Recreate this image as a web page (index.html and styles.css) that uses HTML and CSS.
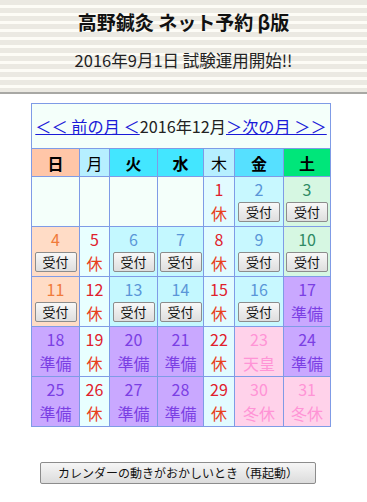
FILE: index.html
```html
<!DOCTYPE html>
<html lang="ja">
<head>
<meta charset="utf-8">
<title>高野鍼灸 ネット予約 β版</title>
<link rel="stylesheet" href="styles.css">
</head>
<body>
<header class="banner">
  <h1 class="title">高野鍼灸 ネット予約 β版</h1>
  <p class="subtitle">2016年9月1日 試験運用開始!!</p>
</header>
<main class="main">
  <table class="cal">
    <colgroup>
      <col class="c48"><col class="c30"><col class="c48"><col class="c46"><col class="c31"><col class="c49"><col class="c47">
    </colgroup>
    <tr class="nav-row">
      <td colspan="7" class="nav"><a href="#">＜＜ 前の月 ＜</a>2016年12月<a href="#">＞次の月 ＞＞</a></td>
    </tr>
    <tr class="head-row">
      <th class="h-sun">日</th><th class="h-mon">月</th><th class="h-tue">火</th><th class="h-wed">水</th><th class="h-thu">木</th><th class="h-fri">金</th><th class="h-sat">土</th>
    </tr>
    <tr>
      <td class="empty"></td><td class="empty"></td><td class="empty"></td><td class="empty"></td>
      <td class="closed thu"><div class="num">1</div><div class="lbl">休</div></td>
      <td class="open fri"><div class="num">2</div><button class="uk">受付</button></td>
      <td class="open sat"><div class="num">3</div><button class="uk">受付</button></td>
    </tr>
    <tr>
      <td class="open sun"><div class="num">4</div><button class="uk">受付</button></td>
      <td class="closed mon"><div class="num">5</div><div class="lbl">休</div></td>
      <td class="open tue"><div class="num">6</div><button class="uk">受付</button></td>
      <td class="open tue"><div class="num">7</div><button class="uk">受付</button></td>
      <td class="closed thu"><div class="num">8</div><div class="lbl">休</div></td>
      <td class="open fri"><div class="num">9</div><button class="uk">受付</button></td>
      <td class="open sat"><div class="num">10</div><button class="uk">受付</button></td>
    </tr>
    <tr>
      <td class="open sun"><div class="num">11</div><button class="uk">受付</button></td>
      <td class="closed mon"><div class="num">12</div><div class="lbl">休</div></td>
      <td class="open tue"><div class="num">13</div><button class="uk">受付</button></td>
      <td class="open tue"><div class="num">14</div><button class="uk">受付</button></td>
      <td class="closed thu"><div class="num">15</div><div class="lbl">休</div></td>
      <td class="open fri"><div class="num">16</div><button class="uk">受付</button></td>
      <td class="prep"><div class="num">17</div><div class="lbl">準備</div></td>
    </tr>
    <tr>
      <td class="prep"><div class="num">18</div><div class="lbl">準備</div></td>
      <td class="closed mon"><div class="num">19</div><div class="lbl">休</div></td>
      <td class="prep"><div class="num">20</div><div class="lbl">準備</div></td>
      <td class="prep"><div class="num">21</div><div class="lbl">準備</div></td>
      <td class="closed thu"><div class="num">22</div><div class="lbl">休</div></td>
      <td class="hol"><div class="num">23</div><div class="lbl">天皇</div></td>
      <td class="prep"><div class="num">24</div><div class="lbl">準備</div></td>
    </tr>
    <tr>
      <td class="prep"><div class="num">25</div><div class="lbl">準備</div></td>
      <td class="closed mon"><div class="num">26</div><div class="lbl">休</div></td>
      <td class="prep"><div class="num">27</div><div class="lbl">準備</div></td>
      <td class="prep"><div class="num">28</div><div class="lbl">準備</div></td>
      <td class="closed thu"><div class="num">29</div><div class="lbl">休</div></td>
      <td class="hol"><div class="num">30</div><div class="lbl">冬休</div></td>
      <td class="hol"><div class="num">31</div><div class="lbl">冬休</div></td>
    </tr>
  </table>
  <div class="reload-wrap">
    <button class="reload">カレンダーの動きがおかしいとき（再起動）</button>
  </div>
</main>
</body>
</html>
```

FILE: styles.css
```css
html, body {
  margin: 0;
  padding: 0;
  background: #ffffff;
  font-family: "Noto Sans CJK JP", "Noto Sans", sans-serif;
  color: #111;
}

.banner {
  height: 92px;
  border-bottom: 2px solid #a8a8a4;
  background: repeating-linear-gradient(to bottom, #ebe9e2 0px, #ebe9e2 5px, #fdfcf6 5px, #fdfcf6 8px);
  display: flex;
  flex-direction: column;
  align-items: center;
  box-sizing: content-box;
}

.title {
  margin: 8px 0 0 0;
  font-size: 19px;
  line-height: 28px;
  font-weight: bold;
  color: #111;
}

.subtitle {
  margin: 12px 0 0 0;
  font-size: 16.5px;
  line-height: 24px;
  color: #222;
}

.main {
  padding-top: 9px;
}

.cal {
  border-collapse: collapse;
  table-layout: fixed;
  width: 299px;
  margin-left: 31px;
  background: #f4fffa;
  border: 1px solid #7f9be6;
}

.c48 { width: 48px; }
.c30 { width: 30px; }
.c46 { width: 46px; }
.c31 { width: 31px; }
.c49 { width: 49px; }
.c47 { width: 47px; }

.cal .nav {
  height: 44px;
  padding: 0;
  vertical-align: middle;
  text-align: center;
  font-size: 16.2px;
  white-space: nowrap;
  color: #222;
  border: 1px solid #7f9be6;
  border-bottom: none;
}

.nav a {
  color: #1a1ad8;
  text-decoration: underline;
}

.head-row th {
  height: 27px;
  padding: 0;
  border: 1px solid #7f9be6;
  font-size: 16px;
  color: #000;
}

.h-sun { background: #ffc6a8; }
.h-mon { background: #b6efff; font-weight: normal; }
.h-tue { background: #43e6ff; }
.h-wed { background: #43e6ff; }
.h-thu { background: #b6efff; font-weight: normal; }
.h-fri { background: #56e0ff; }
.h-sat { background: #00e67a; }

.cal td {
  border: 1px solid #7f9be6;
  padding: 0;
  text-align: center;
  vertical-align: top;
  height: 49px;
}

.num, .lbl {
  font-size: 16px;
  line-height: 24px;
}

.empty { background: #f4fffa; }

.sun { background: #ffdcc6; color: #f07a3a; }
.mon { background: #e8ffff; color: #e0202c; }
.tue { background: #c4f8ff; color: #5a96d8; }
.thu { background: #e2fbff; color: #e0202c; }
.fri { background: #c8f8ff; color: #5a96d8; }
.sat { background: #d6f7e2; color: #2e8a64; }

.closed .lbl { color: #e8401c; }

.prep { background: #c9a8ff; color: #7b3fe4; }
.hol { background: #ffd2ea; color: #ff94d6; }

.uk {
  display: block;
  margin: 1px auto 0 auto;
  width: 42px;
  height: 20px;
  padding: 0;
  font-family: "Noto Sans CJK JP", sans-serif;
  font-size: 13px;
  line-height: 18px;
  color: #111;
  background: linear-gradient(to bottom, #f8f8f8, #dedede);
  border: 1px solid #8c8c8c;
  border-radius: 2px;
}

.reload-wrap {
  padding-top: 32px;
  padding-left: 40px;
}

.reload {
  width: 276px;
  height: 22px;
  padding: 0;
  font-family: "Noto Sans CJK JP", sans-serif;
  font-size: 12px;
  line-height: 20px;
  color: #111;
  background: linear-gradient(to bottom, #f6f6f6, #dcdcdc);
  border: 1px solid #8c8c8c;
  border-radius: 2px;
}
```
